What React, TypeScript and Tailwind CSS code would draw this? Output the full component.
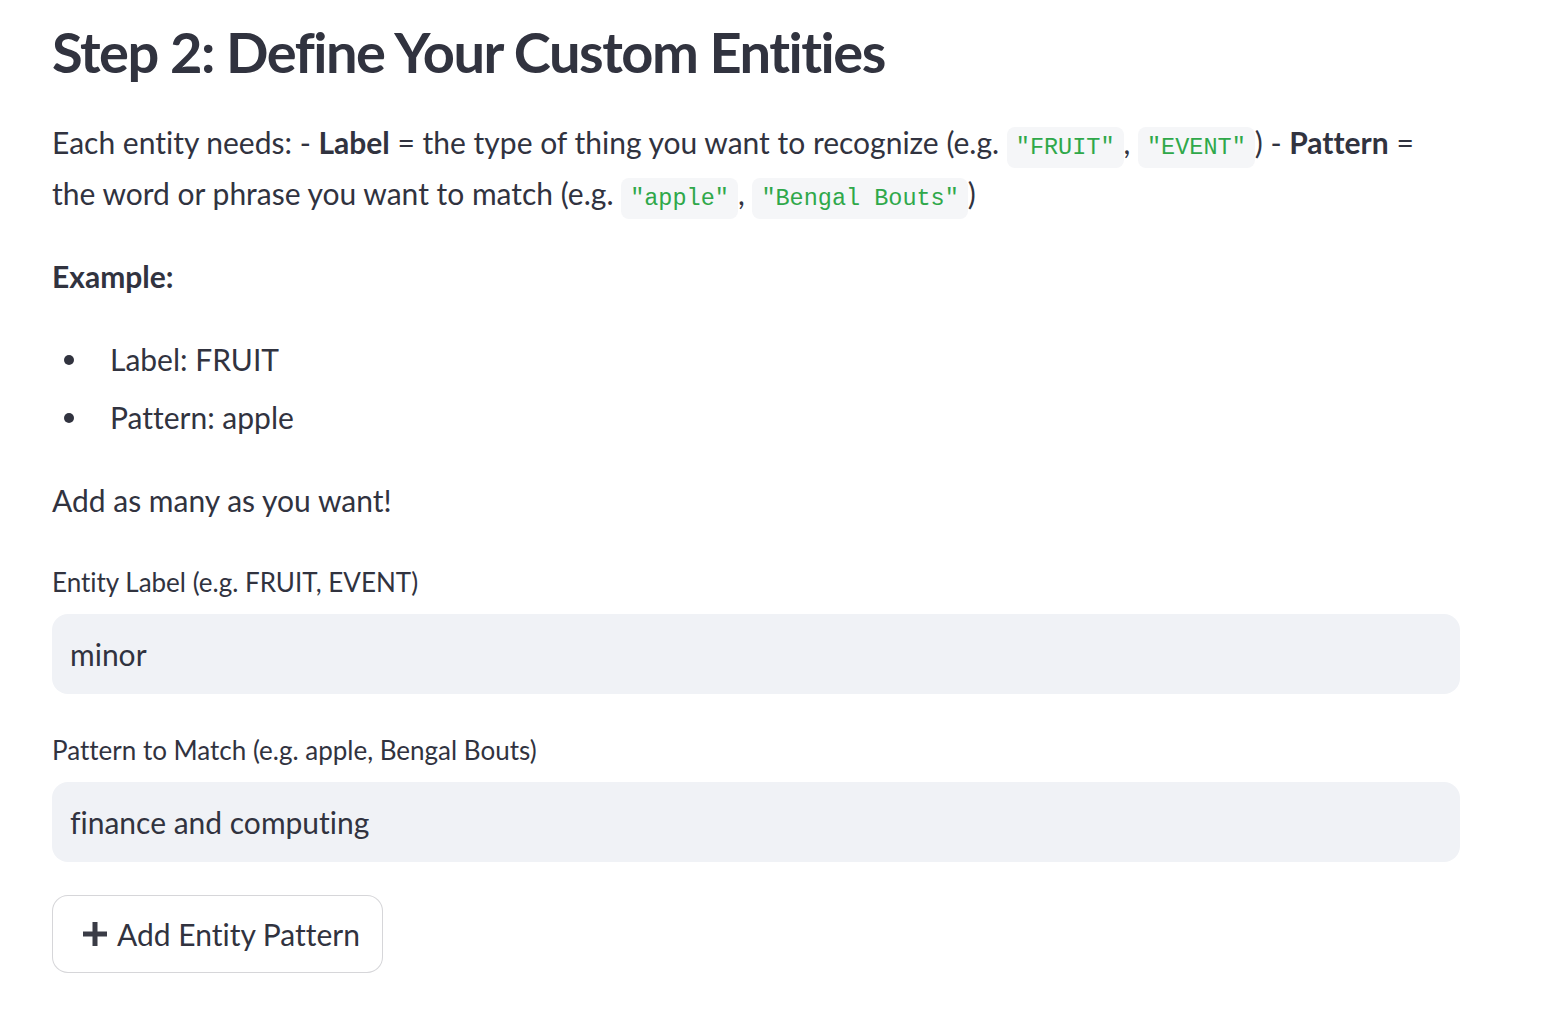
function Code({ children }: { children: string }) {
  return (
    <span className="font-['Liberation_Mono',monospace] text-[23.5px] leading-none text-[#2fa84a] bg-[#f5f6f8] rounded-[8px] px-[9px] py-[7px]">
      {children}
    </span>
  );
}

function Bullet({ children }: { children: string }) {
  return (
    <li className="flex items-center h-[51px]">
      <span className="ml-[12px] w-[10px] h-[10px] rounded-full bg-[#31333f]" />
      <span className="ml-[36px]">{children}</span>
    </li>
  );
}

function Field({ label, value }: { label: string; value: string }) {
  return (
    <div className="flex flex-col">
      <label className="text-[26px] leading-[36px]">{label}</label>
      <div className="mt-[14px] h-[80px] w-[1408px] rounded-[16px] bg-[#f0f2f6] flex items-center pl-[18px] text-[30px]">
        {value}
      </div>
    </div>
  );
}

export default function App() {
  return (
    <div className="min-h-screen bg-white text-[#31333f] font-['Lato',sans-serif] [font-variant-ligatures:none] pl-[52px] pt-[20px]">
      <h2 className="text-[56px] leading-[64px] font-bold tracking-[-1.5px]">
        Step 2: Define Your Custom Entities
      </h2>

      <p className="mt-[33px] text-[30px] leading-[51px]">
        <span className="whitespace-nowrap">
          Each entity needs: - <b>Label</b> = the type of thing you want to recognize (e.g.{' '}
          <Code>"FRUIT"</Code>, <Code>"EVENT"</Code>) - <b>Pattern</b> =
        </span>
        <br />
        <span className="whitespace-nowrap">
          the word or phrase you want to match (e.g. <Code>"apple"</Code>,{' '}
          <Code>"Bengal Bouts"</Code>)
        </span>
      </p>

      <p className="mt-[32px] text-[30px] leading-[51px] font-bold">Example:</p>

      <ul className="mt-[32px] text-[30px] flex flex-col gap-[7px]">
        <Bullet>Label: FRUIT</Bullet>
        <Bullet>Pattern: apple</Bullet>
      </ul>

      <p className="mt-[32px] text-[30px] leading-[51px]">Add as many as you want!</p>

      <div className="mt-[38px] flex flex-col gap-[38px]">
        <Field label="Entity Label (e.g. FRUIT, EVENT)" value="minor" />
        <Field label="Pattern to Match (e.g. apple, Bengal Bouts)" value="finance and computing" />
      </div>

      <button className="mt-[33px] w-[331px] h-[78px] rounded-[16px] border border-[rgba(49,51,63,0.2)] bg-white flex items-center gap-[10px] pl-[30px] text-[30px] text-[#31333f]">
        <svg width="24" height="24" viewBox="0 0 24 24" className="shrink-0">
          <path d="M9.5 0h5v9.5H24v5h-9.5V24h-5v-9.5H0v-5h9.5z" fill="#3a3c46" />
        </svg>
        <span>Add Entity Pattern</span>
      </button>
    </div>
  );
}
